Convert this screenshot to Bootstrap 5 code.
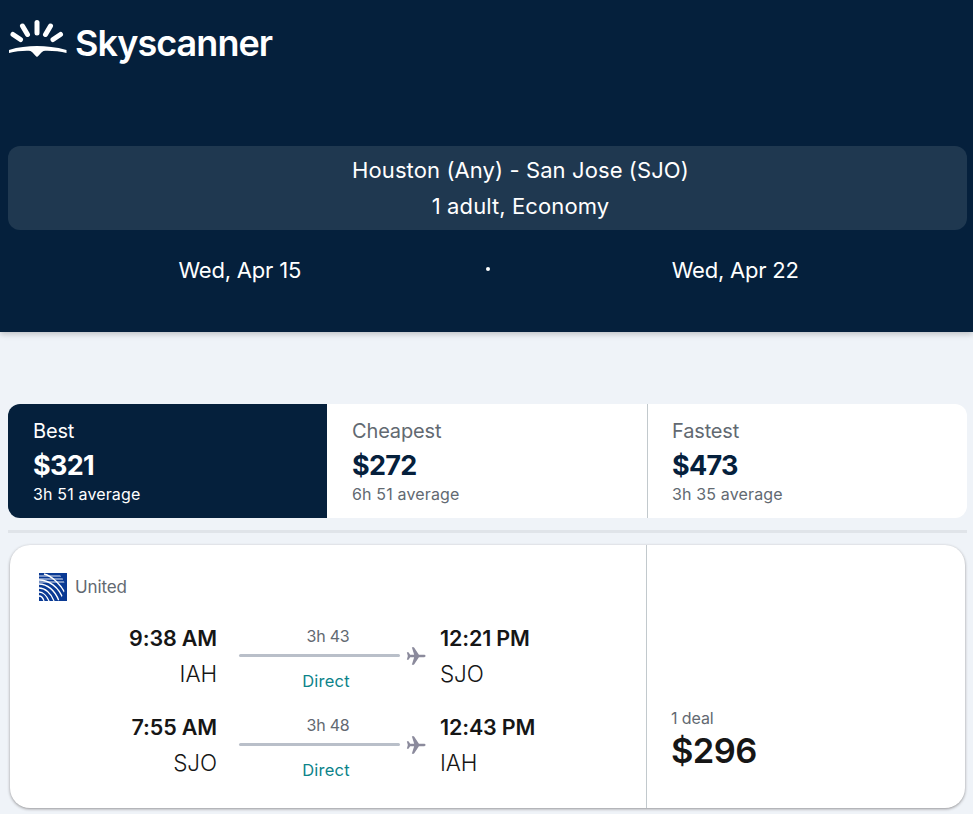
<!DOCTYPE html>
<html lang="en">
<head>
  <meta charset="UTF-8">
  <title>Skyscanner</title>
  <meta name="viewport" content="width=device-width, initial-scale=1">
  <link rel="stylesheet" href="https://cdn.jsdelivr.net/npm/bootstrap@5.3.0/dist/css/bootstrap.min.css">
  <style>
    html, body { height: 814px; overflow: hidden; }
    body { background: #eff3f8; font-family: Inter, "Liberation Sans", sans-serif; color: #161616; }
    .sky-head { height: 332px; background: #05203c; color: #fff; padding: 0 6px 0 8px; box-shadow: 0 2px 6px rgba(0,0,0,.22); }
    .sky-logo { height: 146px; padding-top: 18px; align-items: flex-start; }
    .sky-word { font-size: 36px; font-weight: 600; letter-spacing: -.95px; line-height: 50px; margin-left: 8px; }
    .route-box { height: 84px; background: #1f3850; border-radius: 12px; font-size: 22px; letter-spacing: .1px; line-height: 36px; padding: 6px 0 0 66px; }
    .date-row { height: 80px; font-size: 22px; letter-spacing: -.2px; }
    .date-row > div { flex: 1 1 0; }
    .date-dot { width: 4px; height: 4px; border-radius: 50%; background: #fff; flex: none !important; margin: 0 14px 3px; }
    .sort-tabs { margin: 72px 6px 0 8px; height: 114px; background: #fff; border-radius: 12px; overflow: hidden; }
    .sort-tab { width: 320px; padding: 14px 24px 0 25px; color: #626971; line-height: 1; }
    .sort-tab:last-child { border-left: 1px solid #c2c9cd; padding-left: 24px; }
    .sort-tab.is-on { width: 319px; background: #05203c; color: #fff; }
    .tab-name { font-size: 20px; letter-spacing: -.15px; line-height: 26px; }
    .tab-price { font-size: 27px; font-weight: 700; color: #05203c; letter-spacing: -.7px; line-height: 38px; margin-top: 3px; }
    .is-on .tab-price { color: #fff; }
    .tab-avg { font-size: 16px; letter-spacing: .15px; line-height: 22px; margin-top: -2px; }
    .sort-rule { height: 3px; background: #e0e4e9; margin: 12px 6px 0 8px; }
    .deal-card { height: 263px; margin: 12px 8px 0 10px; background: #fff; border-radius: 20px; box-shadow: 0 1px 3px rgba(37,32,31,.45); overflow: hidden; }
    .deal-left { width: 637px; padding: 28px 0 0 29px; border-right: 1px solid #c2c9cd; }
    .deal-right { flex: 1; padding: 0 0 36px 24px; justify-content: flex-end; }
    .air-row { height: 28px; }
    .air-name { font-size: 17px; line-height: 20px; color: #626971; letter-spacing: -.1px; margin: 0 0 0 8px; }
    .air-logo { width: 28px; height: 28px; display: block; }
    .leg-list { margin-top: 20px; }
    .leg-row { height: 89px; }
    .leg-from { width: 178px; text-align: right; }
    .leg-to { margin-left: 14px; }
    .leg-time { font-size: 21.5px; font-weight: 600; letter-spacing: -.15px; line-height: 35px; }
    .leg-code { font-size: 22.5px; letter-spacing: -.1px; line-height: 36px; font-weight: 300; }
    .leg-mid { width: 187px; margin-left: 22px; padding-top: 3px; }
    .leg-span { width: 176px; text-align: center; font-size: 16px; line-height: 24px; }
    .leg-dur { color: #626971; letter-spacing: -.2px; height: 20px; padding-left: 2px; }
    .leg-rail { height: 20px; margin: 2px -11px 0 0; }
    .leg-line { width: 161px; height: 3px; background: #b9bfc9; border-radius: 2px; margin-top: -1px; }
    .leg-plane { width: 20px; height: 20px; margin-left: 6px; fill: #8b8a9c; }
    .leg-stop { color: #0c838a; font-size: 16.5px; letter-spacing: .2px; margin-top: 3px; padding-right: 2px; }
    .deal-count { font-size: 16px; color: #626971; letter-spacing: -.1px; line-height: 20px; margin-bottom: 2px; }
    .deal-price { font-size: 34.500px; font-weight: 600; letter-spacing: -.6px; line-height: 42px; }
  </style>
</head>
<body>

  <!-- header -->
  <header class="sky-head">
    <div class="sky-logo d-flex">
      <svg width="59" height="40" viewBox="0 0 59 40" aria-hidden="true">
        <g fill="none" stroke="#fff" stroke-width="5" stroke-linecap="round">
          <path d="M29 4.500V15"/>
          <path d="M14.500 8L19.500 16.500"/>
          <path d="M42.500 8L37.500 16.500"/>
          <path d="M5 16.500L12.500 21.500"/>
          <path d="M52.500 16.500L45 21.500"/>
        </g>
        <path fill="#fff" d="M1 32C10 29 20 28 29 28S48 29 58.500 32V35C52 33.500 42 32.500 35.500 33C33 34 31 38 29 39C27 38 25 34 22.500 33C16 32.500 8 33.500 1 35Z"/>
      </svg>
      <span class="sky-word">Skyscanner</span>
    </div>
    <div class="route-box text-center">
      <div>Houston (Any) - San Jose (SJO)</div>
      <div>1 adult, Economy</div>
    </div>
    <div class="date-row d-flex align-items-center text-center">
      <div>Wed, Apr 15</div>
      <div class="date-dot"></div>
      <div>Wed, Apr 22</div>
    </div>
  </header>

  <!-- sort tabs -->
  <div class="sort-tabs d-flex">
    <div class="sort-tab is-on">
      <div class="tab-name">Best</div>
      <div class="tab-price">$321</div>
      <div class="tab-avg">3h 51 average</div>
    </div>
    <div class="sort-tab">
      <div class="tab-name">Cheapest</div>
      <div class="tab-price">$272</div>
      <div class="tab-avg">6h 51 average</div>
    </div>
    <div class="sort-tab flex-fill">
      <div class="tab-name">Fastest</div>
      <div class="tab-price">$473</div>
      <div class="tab-avg">3h 35 average</div>
    </div>
  </div>
  <div class="sort-rule"></div>

  <!-- deal -->
  <div class="deal-card d-flex">
    <div class="deal-left">
      <div class="air-row d-flex align-items-center">
        <svg class="air-logo" viewBox="0 0 28 28" aria-hidden="true">
          <defs><clipPath id="globe"><circle cx="9" cy="14" r="17"/></clipPath></defs>
          <rect width="28" height="28" fill="#0a3a94"/>
          <g clip-path="url(#globe)" fill="none" stroke="#fff">
            <g stroke-width="1.200" opacity=".75">
              <path d="M0 3H22"/>
              <path d="M0 6H24"/>
              <path d="M0 9H26"/>
            </g>
            <g stroke-width="1.300">
              <path d="M0 7C9 7 20 13 25 28"/>
              <path d="M0 11C8 11 16 17 20 28"/>
              <path d="M0 15C6 15 12 20 15 28"/>
              <path d="M0 19C4 19 8 23 10 28"/>
              <path d="M0 23C2 23 4 25 5 28"/>
              <path d="M5 1C13 3 23 12 28 24"/>
            </g>
          </g>
        </svg>
        <span class="air-name">United</span>
      </div>
      <div class="leg-list">
        <div class="leg-row d-flex">
          <div class="leg-from">
            <div class="leg-time">9:38 AM</div>
            <div class="leg-code">IAH</div>
          </div>
          <div class="leg-mid">
            <div class="leg-span">
              <div class="leg-dur">3h 43</div>
              <div class="leg-rail d-flex align-items-center">
                <div class="leg-line"></div>
                <svg class="leg-plane" viewBox="0 0 24 24" aria-hidden="true"><path d="M23.500 12c0-.8-1-1.500-2.500-1.500h-5.500L9.500 1.500H7l2.800 9H5L3 7.500H1l1.200 4.500L1 16.500h2l2-3h4.800L7 22.500h2.500l6-9H21c1.500 0 2.500-.7 2.500-1.500z"/></svg>
              </div>
              <div class="leg-stop">Direct</div>
            </div>
          </div>
          <div class="leg-to">
            <div class="leg-time">12:21 PM</div>
            <div class="leg-code">SJO</div>
          </div>
        </div>
        <div class="leg-row d-flex">
          <div class="leg-from">
            <div class="leg-time">7:55 AM</div>
            <div class="leg-code">SJO</div>
          </div>
          <div class="leg-mid">
            <div class="leg-span">
              <div class="leg-dur">3h 48</div>
              <div class="leg-rail d-flex align-items-center">
                <div class="leg-line"></div>
                <svg class="leg-plane" viewBox="0 0 24 24" aria-hidden="true"><path d="M23.500 12c0-.8-1-1.500-2.500-1.500h-5.500L9.500 1.500H7l2.800 9H5L3 7.500H1l1.200 4.500L1 16.500h2l2-3h4.800L7 22.500h2.500l6-9H21c1.500 0 2.500-.7 2.500-1.500z"/></svg>
              </div>
              <div class="leg-stop">Direct</div>
            </div>
          </div>
          <div class="leg-to">
            <div class="leg-time">12:43 PM</div>
            <div class="leg-code">IAH</div>
          </div>
        </div>
      </div>
    </div>
    <div class="deal-right d-flex flex-column">
      <div class="deal-count">1 deal</div>
      <div class="deal-price">$296</div>
    </div>
  </div>

  <script src="https://cdn.jsdelivr.net/npm/bootstrap@5.3.0/dist/js/bootstrap.bundle.min.js"></script>
</body>
</html>
